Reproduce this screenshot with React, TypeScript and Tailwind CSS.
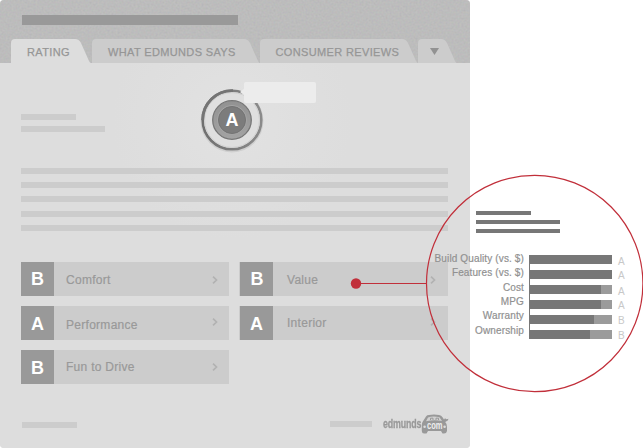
import type { ReactNode } from 'react';

const sans = "font-['Liberation_Sans',Arial,sans-serif]";

function Tab({ width, active, className = '', children }: { width: number; active?: boolean; className?: string; children: ReactNode }) {
  return (
    <div className={`relative h-6 ${className}`} style={{ width }}>
      <svg className="absolute inset-0" width={width} height="24" aria-hidden="true">
        <path
          d={`M0 24V4Q0 0 4 0H${width - 16}Q${width - 12} 0 ${width - 10} 4L${width - 2} 22Q${width - 1} 24 ${width} 24Z`}
          fill={active ? '#dddddd' : '#cccccc'}
        />
      </svg>
      <div className="relative flex h-[26px] items-center whitespace-nowrap text-[11px] tracking-[0.36px] text-[#969696] [-webkit-text-stroke:0.25px_#969696]">
        {children}
      </div>
    </div>
  );
}

function Chevron({ className = '' }: { className?: string }) {
  return (
    <svg className={`shrink-0 ${className}`} width="6" height="8" viewBox="0 0 6 8" fill="none" stroke="#b2b2b2" strokeWidth="1.7" aria-hidden="true">
      <path d="M1 .6L4.5 4L1 7.4" />
    </svg>
  );
}

function Row({ grade, label, second, badge = '', text = '', arrow = '' }: { grade: string; label: string; second?: boolean; badge?: string; text?: string; arrow?: string }) {
  return (
    <div className={`flex h-[34px] items-center bg-[#cccccc] ${second ? 'w-[209px] pl-px' : 'w-[208px]'}`}>
      <div className="flex h-full w-[33px] items-center justify-center bg-[#999999] text-[18px] leading-none font-bold text-white">
        <span className={badge}>{grade}</span>
      </div>
      <span className={`flex-1 text-[12px] leading-4 tracking-[0.28px] text-[#999999] [-webkit-text-stroke:0.2px_#999999] ${second ? 'pl-[14px]' : 'pl-[12px]'} ${text}`}>{label}</span>
      <Chevron className={`${second ? 'mr-[12px]' : 'mr-[11px]'} ${arrow}`} />
    </div>
  );
}

function Dial() {
  return (
    <div className="relative h-[68px] w-[68px]">
      <svg className="absolute inset-0" width="68" height="68" aria-hidden="true">
        <defs>
          <linearGradient id="ring" x1="0" y1="0" x2="1" y2="0">
            <stop offset="0" stopColor="#707070" />
            <stop offset="1" stopColor="#8a8a8a" />
          </linearGradient>
          <linearGradient id="rim" x1="0" y1="0" x2="0" y2="1">
            <stop offset="0" stopColor="#929292" />
            <stop offset="1" stopColor="#a3a3a3" />
          </linearGradient>
        </defs>
        <circle cx="34" cy="35" r="30.3" fill="none" stroke="#cfcfcf" strokeWidth="2.2" />
        <circle cx="34" cy="34" r="29.3" fill="#dfdfdf" stroke="url(#ring)" strokeWidth="2.6" />
        <circle cx="34" cy="34" r="27.4" fill="none" stroke="#cfcfcf" />
        <path d="M4.7 34A29.3 29.3 0 0 1 35 4.7" fill="none" stroke="#747474" strokeWidth="2.8" />
        <circle cx="34" cy="34" r="19.3" fill="url(#rim)" stroke="#777777" strokeWidth="1.3" />
        <circle cx="34" cy="34" r="14.5" fill="none" stroke="#a5a5a5" />
        <circle cx="34" cy="34" r="13.5" fill="#7c7c7c" stroke="#747474" />
      </svg>
      <span className="relative flex h-[69px] items-center justify-center text-[18px] font-bold text-white">A</span>
      <div className="absolute top-[-4px] left-[46px] h-[21px] w-[72px] rounded-[2px] bg-[#ececec]">
        <svg className="absolute top-[6px] left-[-4px]" width="5" height="8" aria-hidden="true"><path d="M5 0L0 4L5 8Z" fill="#ececec" /></svg>
      </div>
    </div>
  );
}

function Logo() {
  return (
    <div className="flex h-5 w-[66px] items-start text-[#999999]">
      <div className="w-[38px] pt-[2px]">
        <span className="block origin-left scale-x-[0.68] text-[13px] leading-4 font-bold tracking-[-0.2px] [-webkit-text-stroke:0.3px_#999999]">edmunds</span>
      </div>
      <svg width="28" height="20" viewBox="0 0 28 20" aria-hidden="true">
        <path d="M1.5 8L5 2.4Q6 1 8 1Q13 .2 18 1Q20.5 1.2 21.5 3.2L23 5.6L24 4.2L25.5 5.2L27.5 4.8L26.8 6.6L24.2 8Q26.3 10 26 13V17Q25.5 19.5 23 19.5H21.5L20 17H7L5.5 19.5H3Q1 19.5 .8 17V11Q1 9 1.5 8Z" fill="#999999" />
        <path d="M5 7.2L7 3.4Q12 1.7 18.5 3.2L21 7Q14 5.3 5 7.2Z" fill="#d1d1d1" />
        <path d="M9.5 6V4.2H12V6M15 6V4.2H17.5V6" stroke="#999999" fill="none" />
        <circle cx="3.6" cy="12.8" r="1.3" fill="#dddddd" />
        <circle cx="23.6" cy="12.8" r="1.3" fill="#dddddd" />
        <text x="6" y="14.6" textLength="15.5" lengthAdjust="spacingAndGlyphs" fontFamily="Liberation Sans" fontWeight="700" fontSize="10" fill="#eeeeee">com</text>
      </svg>
    </div>
  );
}

const scores = [
  { label: 'Build Quality (vs. $)', grade: 'A', value: 83, place: 'h-[14px]', gradePlace: 'h-[14px]' },
  { label: 'Features (vs. $)', grade: 'A', value: 83, place: 'h-[15px]', gradePlace: 'h-[16px]' },
  { label: 'Cost', grade: 'A', value: 72, place: 'h-[14px]', gradePlace: 'h-[14px]' },
  { label: 'MPG', grade: 'A', value: 72, place: 'h-[14px]', gradePlace: 'h-[15px]' },
  { label: 'Warranty', grade: 'B', value: 65, place: 'h-[15px]', gradePlace: 'h-[15px]' },
  { label: 'Ownership', grade: 'B', value: 61, place: 'h-[14px]', gradePlace: 'h-[15px]' },
];

function Detail() {
  return (
    <div className="absolute top-[175px] left-[426px] h-[217px] w-[217px]">
      <div className="flex flex-col gap-[5px] pt-9 pl-[50px]">
        <div className="h-1 w-[55px] bg-[#777777]" />
        <div className="h-1 w-[84px] bg-[#777777]" />
        <div className="h-1 w-[84px] bg-[#777777]" />
      </div>
      <div className="flex pt-[18px]">
        <div className="flex w-[98px] flex-col items-end pt-px text-[10px] tracking-[0.13px] text-[#919191] [-webkit-text-stroke:0.2px_#919191]">
          {scores.map((s) => <div key={s.label} className={`whitespace-nowrap leading-[14px] ${s.place}`}>{s.label}</div>)}
        </div>
        <div className="mt-[4px] ml-[5px] flex h-[84px] w-[83px] flex-col gap-[6px] bg-linear-to-r from-[#777777] from-[1px] to-transparent to-[1px]">
          {scores.map((s) => (
            <div key={s.label} className="h-[9px] bg-[#9b9b9b]">
              <div className="h-full bg-[#777777]" style={{ width: s.value }} />
            </div>
          ))}
        </div>
        <div className="mt-[3px] ml-[6px] text-[10px] leading-[15px] text-[#c8c8c8]">
          {scores.map((s) => <div key={s.label} className={s.gradePlace}>{s.grade}</div>)}
        </div>
      </div>
    </div>
  );
}

export default function App() {
  return (
    <div className={`relative h-[448px] w-[643px] overflow-hidden bg-white ${sans}`}>
      <main className="flex h-[448px] w-[470px] flex-col overflow-hidden rounded-[4px] bg-[#dddddd]">
        <header className="relative h-[63px] bg-[#bdbdbd]">
          <svg className="absolute inset-0" width="470" height="63" aria-hidden="true">
            <filter id="grain"><feTurbulence type="fractalNoise" baseFrequency="0.5" numOctaves="2" seed="4" /><feColorMatrix values="0.8 0.2 0 0 0  0.2 0.8 0 0 0  0.2 0.2 0.6 0 0  0 0 0 0 1" /></filter>
            <rect width="470" height="63" filter="url(#grain)" opacity="0.1" />
          </svg>
          <div className="relative pt-[15px] pl-[22px]"><div className="h-[10px] w-[216px] bg-[#999999]" /></div>
          <nav className="relative flex pt-[14px] pl-[11px]">
            <Tab width={80} active><span className="pl-4">RATING</span></Tab>
            <Tab width={168} className="ml-px"><span className="pl-4">WHAT EDMUNDS SAYS</span></Tab>
            <Tab width={158}><span className="pl-[15.5px]">CONSUMER REVIEWS</span></Tab>
            <Tab width={39}><svg className="mb-px ml-3" width="9" height="7" aria-hidden="true"><path d="M0 0H9L4.5 7Z" fill="#929292" /></svg></Tab>
          </nav>
        </header>
        <section className="flex-1 bg-[radial-gradient(circle_at_232px_57px,#e2e2e2_0,#dfdfdf_65px,#dddddd_120px)]">
          <div className="flex h-[105px] px-[21px]">
            <div className="flex w-[177px] flex-col gap-[6px] pt-[51px]">
              <div className="h-[6px] w-[55px] bg-[#cccccc]" />
              <div className="h-[6px] w-[84px] bg-[#cccccc]" />
            </div>
            <div className="pt-[23px]"><Dial /></div>
          </div>
          <div className="mx-[21px] flex w-[427px] flex-col gap-2">
            <div className="h-[6px] bg-[#cccccc]" />
            <div className="h-[6px] bg-[#cccccc]" />
            <div className="h-[6px] bg-[#cccccc]" />
            <div className="mt-px h-[6px] bg-[#cccccc]" />
            <div className="h-[6px] bg-[#cccccc]" />
          </div>
          <div className="mt-[31px] ml-[21px] grid grid-cols-[208px_209px] gap-x-[10px] gap-y-[10px]">
            <Row grade="B" label="Comfort" text="pt-px" arrow="mt-[2px]" />
            <Row second grade="B" label="Value" badge="pl-px" text="pt-px" arrow="mt-[2px]" />
            <Row grade="A" label="Performance" badge="pt-px" text="pt-[3px]" arrow="mb-[2px]" />
            <Row second grade="A" label="Interior" badge="pt-px" text="pb-px" arrow="mb-[2px]" />
            <Row grade="B" label="Fun to Drive" badge="pt-px" text="pb-px" />
          </div>
          <footer className="mt-[30px] flex pl-[22px]">
            <div className="mt-2 h-[6px] w-[55px] bg-[#cccccc]" />
            <div className="mt-[7px] ml-[253px] h-[6px] w-[42px] bg-[#cccccc]" />
            <div className="ml-[11px]"><Logo /></div>
          </footer>
        </section>
      </main>
      <Detail />
      <svg className="absolute inset-0" width="643" height="448" aria-hidden="true">
        <circle cx="534.7" cy="283.5" r="108.2" fill="none" stroke="#c12f3a" strokeWidth="1.2" />
        <rect x="356" y="283" width="71" height="1" fill="#c12f3a" />
        <circle cx="356" cy="283.5" r="5.2" fill="#c12f3a" />
      </svg>
    </div>
  );
}
